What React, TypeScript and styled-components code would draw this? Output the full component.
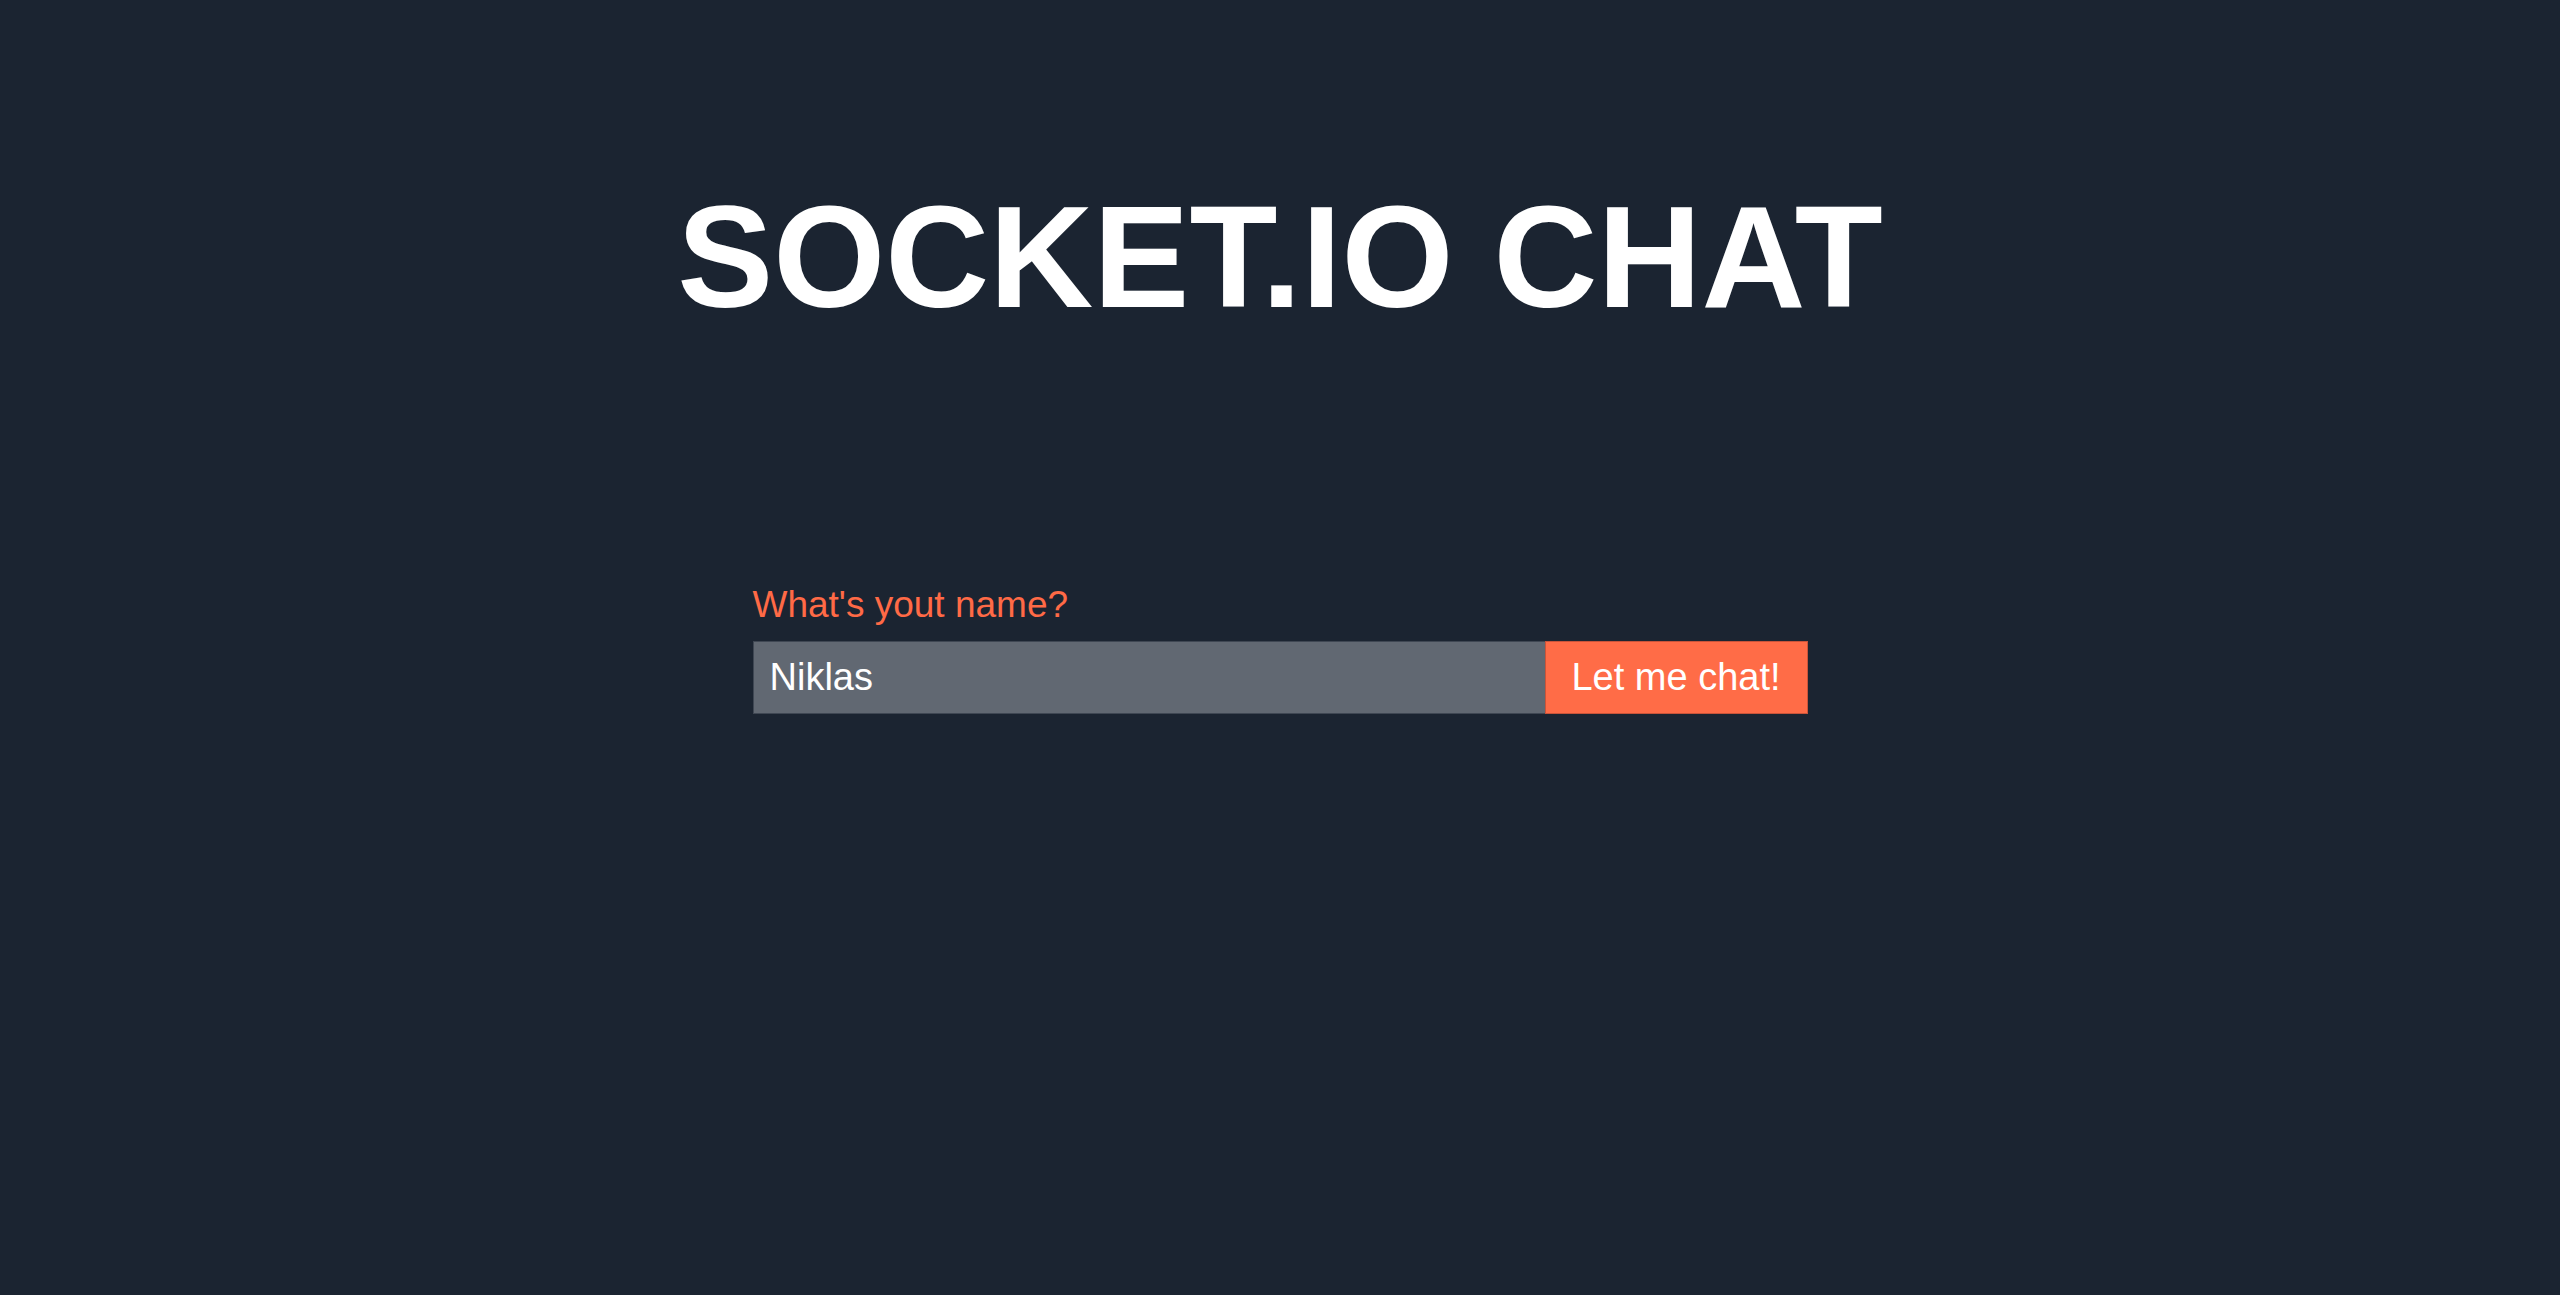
import React from "react";
import styled, { createGlobalStyle } from "styled-components";

const GlobalStyle = createGlobalStyle`
  html, body {
    margin: 0;
    padding: 0;
    background: #1b2431;
    min-height: 100%;
  }
  body {
    font-family: "Liberation Sans", Arial, Helvetica, sans-serif;
    color: #ffffff;
  }
  * { box-sizing: border-box; }
`;

const Page = styled.main`
  min-height: 1295px;
  background: #1b2431;
  display: flex;
  flex-direction: column;
  align-items: center;
  padding-top: 175px;
`;

const Title = styled.h1`
  margin: 0;
  font-family: "Liberation Sans", Arial, sans-serif;
  font-weight: 700;
  font-size: 144px;
  line-height: 166px;
  color: #ffffff;
  text-align: center;
`;

const LoginForm = styled.form`
  margin-top: 242px;
  width: 1055px;
  display: flex;
  flex-direction: column;
  gap: 15px;
`;

const Label = styled.label`
  font-family: "Liberation Sans", Arial, sans-serif;
  font-size: 37px;
  line-height: 43px;
  color: #ff6a46;
`;

const Row = styled.div`
  display: flex;
  height: 73px;
`;

const NameInput = styled.input`
  flex: 1;
  min-width: 0;
  height: 73px;
  margin: 0;
  padding: 0 16px;
  border: 1px solid #3f4753;
  border-right: none;
  background: #616872;
  color: #ffffff;
  font-family: "Liberation Sans", Arial, sans-serif;
  font-size: 38px;
  outline: none;
  border-radius: 0;
`;

const ChatButton = styled.button`
  height: 73px;
  width: 263px;
  margin: 0;
  padding: 0;
  border: 1px solid #c9543a;
  background: #ff6c47;
  color: #ffffff;
  font-family: "Liberation Sans", Arial, sans-serif;
  font-size: 38px;
  cursor: pointer;
  border-radius: 0;
`;

export default function App() {
  return (
    <>
      <GlobalStyle />
      <Page>
        <Title>SOCKET.IO CHAT</Title>
        <LoginForm onSubmit={(e) => e.preventDefault()}>
          <Label htmlFor="name">What's yout name?</Label>
          <Row>
            <NameInput id="name" defaultValue="Niklas" />
            <ChatButton type="submit">Let me chat!</ChatButton>
          </Row>
        </LoginForm>
      </Page>
    </>
  );
}
